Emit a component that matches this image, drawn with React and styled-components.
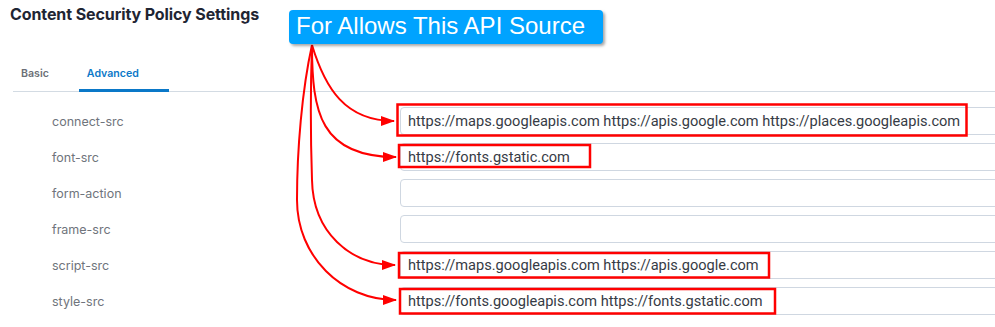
import React from 'react';
import styled, { createGlobalStyle } from 'styled-components';

const GlobalStyle = createGlobalStyle`
  body {
    margin: 0;
    background: #fff;
    overflow: hidden;
    font-family: Inter, "Noto Sans", sans-serif;
  }
`;

const Page = styled.div`
  position: relative;
  width: 1010px;
  height: 327px;
  padding-left: 10px;
  box-sizing: border-box;
`;

const Title = styled.h2`
  margin: 0;
  padding-top: 4px;
  font-size: 16px;
  line-height: 20px;
  font-weight: 700;
  color: #1f2533;
  letter-spacing: -0.1px;
`;

const TabBar = styled.div`
  display: flex;
  margin: 41px 0 0 3px;
  border-bottom: 1px solid #d3dbe3;
`;

const Tab = styled.div`
  padding: 0 30px 0 8px;
  height: 27px;
  line-height: 18px;
  font-size: 10.6px;
  font-weight: 600;
  color: ${(p) => (p.active ? '#0a78c8' : '#6b6f76')};
  box-shadow: ${(p) => (p.active ? 'inset 0 -3px 0 #0a78c8' : 'none')};
  margin-bottom: -1px;
`;

const Form = styled.div`
  display: grid;
  grid-template-columns: 387px 1fr;
  row-gap: 8px;
  margin: 15px 0 0 3px;
`;

const Label = styled.div`
  padding-left: 39px;
  font-size: 12.5px;
  color: #6f747c;
  display: flex;
  align-items: center;
  height: 28px;
`;

const Field = styled.div`
  height: 28px;
  box-sizing: border-box;
  border: 1px solid #cfd7e1;
  border-radius: 4px;
  padding: 0 7px;
  font-family: Roboto, "Liberation Sans", sans-serif;
  font-size: 14.6px;
  line-height: 26px;
  color: #363b45;
  white-space: nowrap;
  overflow: hidden;
`;

const Callout = styled.div`
  position: absolute;
  left: 289px;
  top: 10px;
  width: 314px;
  height: 34px;
  box-sizing: border-box;
  padding: 0 0 2px 7px;
  background: #00a3ff;
  border-radius: 4px;
  box-shadow: 2px 2px 3px rgba(0, 0, 0, 0.35);
  color: #fff;
  font-family: "Liberation Sans", Arial, sans-serif;
  font-size: 24px;
  line-height: 32px;
  white-space: nowrap;
  z-index: 2;
`;

const Overlay = styled.svg`
  position: absolute;
  left: 0;
  top: 0;
  pointer-events: none;
  z-index: 1;
`;

const rows = [
  ['connect-src', 'https://maps.googleapis.com https://apis.google.com https://places.googleapis.com'],
  ['font-src', 'https://fonts.gstatic.com'],
  ['form-action', ''],
  ['frame-src', ''],
  ['script-src', 'https://maps.googleapis.com https://apis.google.com'],
  ['style-src', 'https://fonts.googleapis.com https://fonts.gstatic.com'],
];

const boxes = [
  { x: 397.5, y: 104.5, w: 569, h: 31 },
  { x: 399, y: 145, w: 191, h: 22 },
  { x: 399, y: 253, w: 370, h: 24.5 },
  { x: 400, y: 289, w: 375, h: 24.5 },
];

const arrows = [
  'M312,45 C325,88 345,121 394,121',
  'M312,45 C312,112 320,157 396,157',
  'M312,45 C310,100 311,150 312,180 C313,232 350,265 395,265',
  'M312,45 C302,90 297,150 297,200 C297,256 341,300 396,300',
];

const Annotations = () => (
  <Overlay width="995" height="327" viewBox="0 0 995 327">
    <defs>
      <marker id="head" viewBox="0 0 14 10" refX="13" refY="5" markerWidth="14" markerHeight="10" markerUnits="userSpaceOnUse" orient="auto">
        <path d="M0,0 L14,5 L0,10 z" fill="#ff0000" />
      </marker>
    </defs>
    {boxes.map((b, i) => (
      <rect key={i} x={b.x} y={b.y} width={b.w} height={b.h} fill="none" stroke="#ff0000" strokeWidth="2.5" />
    ))}
    {arrows.map((d, i) => (
      <path key={i} d={d} fill="none" stroke="#ff0000" strokeWidth="2" markerEnd="url(#head)" />
    ))}
  </Overlay>
);

export default function App() {
  return (
    <>
      <GlobalStyle />
      <Page>
        <Title>Content Security Policy Settings</Title>
        <TabBar>
          <Tab>Basic</Tab>
          <Tab active>Advanced</Tab>
        </TabBar>
        <Form>
          {rows.map(([name, value]) => (
            <React.Fragment key={name}>
              <Label>{name}</Label>
              <Field>{value}</Field>
            </React.Fragment>
          ))}
        </Form>
        <Callout>For Allows This API Source</Callout>
        <Annotations />
      </Page>
    </>
  );
}
